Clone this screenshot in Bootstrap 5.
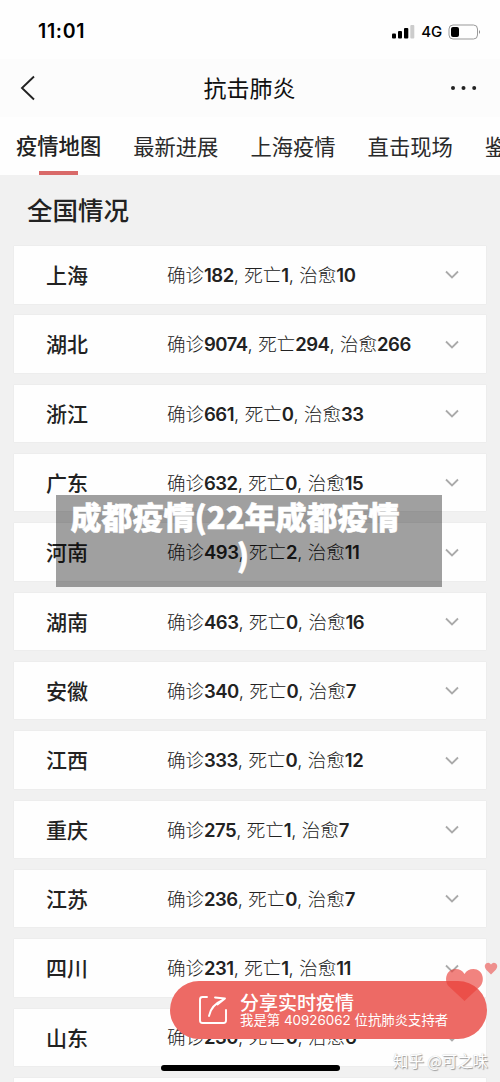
<!DOCTYPE html>
<html lang="zh-CN">
<head>
<meta charset="utf-8">
<meta name="viewport" content="width=device-width, initial-scale=1">
<title>抗击肺炎</title>
<link href="https://cdn.jsdelivr.net/npm/bootstrap@5.3.0/dist/css/bootstrap.min.css" rel="stylesheet">
<style>
body{font-family:"Noto Sans CJK SC",sans-serif;color:#222;background:#f1f1f1}
.screen{width:500px;height:1082px;background:#f1f1f1}
.statusbar{height:59px;padding:4px 19px 0 38px;background:#fefefe;color:#000;font-family:Inter,sans-serif}
.clock{font-size:19.5px;font-weight:600;letter-spacing:.65px}
.network{font-size:15px;font-weight:500;letter-spacing:-.2px;margin:0 6px 0 6px;padding-top:1px}
.topbar{height:58px;padding:0 23px 0 20px;background:#fcfcfc}
.topbar h1{font-size:23px;font-weight:400;margin:-2px 0 0 12px;color:#111;line-height:56px}
.tabs{height:58px;padding-left:16px;gap:32px;background:#fefefe;font-size:21.3px;line-height:58px;white-space:nowrap}
.tabs .nav-link{padding:0;color:#2a2a2a;flex:none}
.tabs .current{font-weight:500;color:#222;position:relative;top:-1px}
.tabs .current::after{content:"";position:absolute;left:23px;top:55px;width:39px;height:4px;background:#d96a69}
.section-title{height:71px;padding-left:27px;font-size:25.5px;font-weight:500;line-height:67px;margin:0}
.regions{gap:11.83px;padding:0 14px}
.region{height:57.5px;border:0;border-radius:0;background:#fefefe;box-shadow:0 0 1px #ddd;padding:0 27px 0 32px}
.place{width:121px;font-size:21px;font-weight:500}
.stats{font-size:18.5px;font-weight:300;white-space:nowrap;color:#222;padding-top:1px}
.stats b{font-family:Inter,sans-serif;font-weight:600;font-size:18.5px;letter-spacing:-.5px}
.stats i{font-style:normal;font-family:Inter,sans-serif;letter-spacing:.1px}
.caption-box{left:56px;top:495px;width:386px;height:92px;background:rgba(0,0,0,.37);color:#fff;font-weight:900;font-size:31px;line-height:38px;text-align:center;padding:2px 42px 0 14px;z-index:2;white-space:nowrap;-webkit-text-stroke:.5px #fff}
.caption-box span{display:block;padding-left:16px}
.share{left:170px;top:981px;width:317px;height:58px;border-radius:29px;background:#ed6a65;color:#fff;z-index:3;padding:0 0 1px 28px}
.share-title{font-size:19px;font-weight:500;line-height:21px}
.share-note{font-family:Inter,"Noto Sans CJK SC",sans-serif;font-size:13.4px;line-height:17px;white-space:nowrap}
.hearts{left:440px;top:956px;z-index:4}
.homebar{left:161px;top:1065px;width:179px;height:6px;border-radius:3px;background:#000;z-index:4}
.watermark{left:393px;top:1049px;font-size:15.4px;color:#fff;z-index:4;white-space:nowrap;text-shadow:1px 1px 1px #999,0 0 1px #bbb;line-height:23px}
</style>
</head>
<body>
<div class="screen position-relative overflow-hidden">
  <header>
    <div class="statusbar d-flex align-items-center justify-content-between">
      <span class="clock">11:01</span>
      <div class="d-flex align-items-center">
        <svg width="24" height="16" viewBox="0 0 24 16"><rect x="1" y="9.5" width="4" height="5" rx="1"/><rect x="7" y="7" width="4" height="7.5" rx="1"/><rect x="13" y="4" width="4.300" height="10.500" rx="1"/><rect x="19.300" y="1" width="4" height="13.500" rx="1" fill="#ccc"/></svg>
        <span class="network">4G</span>
        <svg width="33" height="16" viewBox="0 0 33 16"><rect x="1" y="1" width="28.500" height="14" rx="4" fill="none" stroke="#999"/><rect x="3" y="3" width="8" height="10" rx="2"/><path d="M31 6q2 2 0 4z" fill="#888"/></svg>
      </div>
    </div>
    <div class="topbar d-flex align-items-center justify-content-between">
      <svg width="17" height="26" viewBox="0 0 17 26" fill="none" stroke="#222" stroke-width="1.900"><path d="M14 1.500 2 13 14 24.500"/></svg>
      <h1>抗击肺炎</h1>
      <svg width="27" height="6" viewBox="0 0 27 6" fill="#222"><circle cx="3" cy="3" r="2"/><circle cx="13.500" cy="3" r="2"/><circle cx="24.200" cy="3" r="2"/></svg>
    </div>
    <nav class="tabs d-flex overflow-hidden">
      <a class="nav-link current">疫情地图</a><a class="nav-link">最新进展</a><a class="nav-link">上海疫情</a><a class="nav-link">直击现场</a><a class="nav-link">鉴</a>
    </nav>
  </header>
  <main>
    <h2 class="section-title">全国情况</h2>
    <div class="regions d-flex flex-column" id="regions"></div>
  </main>
  <div class="caption-box position-absolute">成都疫情(22年成都疫情<span>)</span></div>
  <div class="share position-absolute d-flex align-items-center">
    <svg width="30" height="30" viewBox="0 0 30 30" fill="none" stroke="#fff" stroke-width="1.900" stroke-linecap="round" stroke-linejoin="round"><path d="M9 2H4.500Q2 2 2 4.500v21Q2 28 4.500 28h21q2.500 0 2.500-2.500V15M11 21Q13 10 25 5M17 2.500 27 3.500 19.500 9.500"/></svg>
    <div class="ms-2 ps-1">
      <div class="share-title">分享实时疫情</div>
      <div class="share-note">我是第 40926062 位抗肺炎支持者</div>
    </div>
  </div>
  <svg class="hearts position-absolute" width="60" height="50" viewBox="0 0 60 50"><path d="M24.500 45 9 30.500C3.500 25 6 13 15.500 13q6 0 9 5q3-5 9-5C43 13 45.500 25 40 30.500Z" fill="#e9403b" fill-opacity=".65"/><path d="m51 18.500-5-5q-2.500-4 0-6 3-2 5 1 2-3 5-1 2.500 2 0 6Z" fill="#ee7774" fill-opacity=".8"/></svg>
  <div class="homebar position-absolute"></div>
  <div class="watermark position-absolute">知乎 @可之味</div>
</div>
<script src="https://cdn.jsdelivr.net/npm/bootstrap@5.3.0/dist/js/bootstrap.bundle.min.js"></script>
<script>
const data=[["上海",182,1,10],["湖北",9074,294,266],["浙江",661,0,33],["广东",632,0,15],["河南",493,2,11],["湖南",463,0,16],["安徽",340,0,7],["江西",333,0,12],["重庆",275,1,7],["江苏",236,0,7],["四川",231,1,11],["山东",230,0,6],["",0,0,0]];
document.getElementById("regions").innerHTML=data.map(([name,c,d,h])=>`<div class="region card flex-row align-items-center flex-shrink-0">${name?`<span class="place">${name}</span><span class="stats flex-grow-1">确诊<b>${c}</b><i>, </i>死亡<b>${d}</b><i>, </i>治愈<b>${h}</b></span><svg width="14" height="9" viewBox="0 0 14 9" fill="none" stroke="#aaa" stroke-width="1.800"><path d="m1 1.500 6 6 6-6"/></svg>`:""}</div>`).join("");
</script>
</body>
</html>
